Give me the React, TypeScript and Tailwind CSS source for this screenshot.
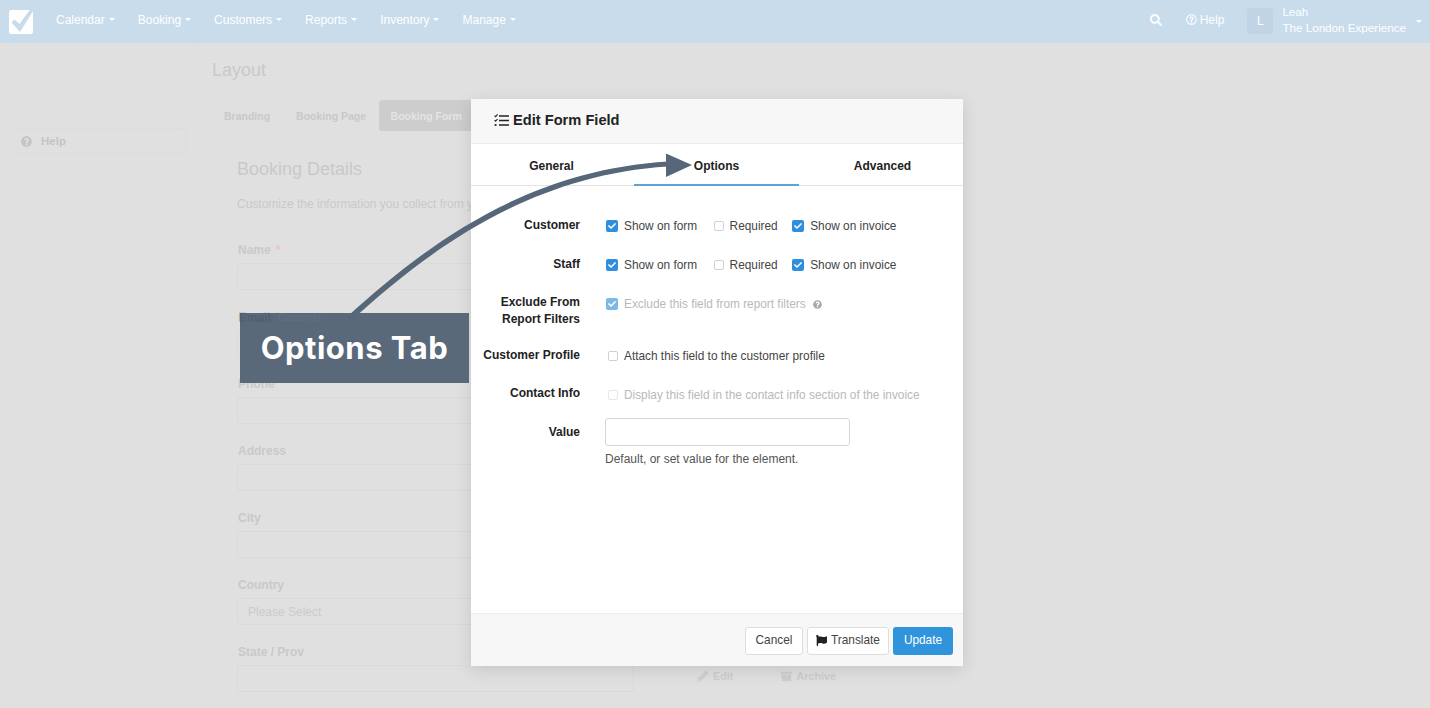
import { FaArchive, FaCheck, FaFlag, FaPencilAlt, FaQuestionCircle, FaRegQuestionCircle, FaSearch } from 'react-icons/fa'

const navItems = ['Calendar', 'Booking', 'Customers', 'Reports', 'Inventory', 'Manage']
const bgFields = [
  { label: 'Name', required: true },
  { label: 'Email', required: true },
  { label: 'Phone' },
  { label: 'Address' },
  { label: 'City' },
  { label: 'Country', placeholder: 'Please Select' },
  { label: 'State / Prov' },
]

function Caret({ className = '' }: { className?: string }) {
  return <span className={`inline-block h-0 w-0 border-x-[3.5px] border-t-[3.5px] border-x-transparent border-t-white ${className}`} />
}

function Logo() {
  return (
    <svg width="27" height="27" viewBox="0 0 27 27" className="shrink-0">
      <rect x="1" y="2" width="24" height="24" rx="2.5" fill="#ffffff" />
      <path d="M3.5 14.5 L6.5 11.5 L11.5 16 L22 1.5 H26 L12 24 Z" fill="#c9dcec" />
    </svg>
  )
}

function TasksIcon() {
  return (
    <svg width="15" height="13" viewBox="0 0 15 13" className="shrink-0 text-[#222]">
      <path d="M5 2h10M5 6.5h10M5 11h10" stroke="currentColor" strokeWidth="1.6" fill="none" />
      <path d="M0.6 1.6l1 1L3.6 0.4M0.6 6.2l1 1L3.6 5" stroke="currentColor" strokeWidth="1.1" fill="none" />
      <circle cx="1.6" cy="11" r="1.1" fill="currentColor" />
    </svg>
  )
}

function Check({ checked = false, faded = false, label, help = false }: { checked?: boolean; faded?: boolean; label: string; help?: boolean }) {
  return (
    <div className={`flex items-center gap-[6px] text-[11.85px] ${faded ? 'text-[#b9b9b9]' : 'text-[#444]'}`}>
      {checked ? (
        <span className={`-mt-[2px] flex h-[12px] w-[12px] items-center justify-center rounded-[2px] ${faded ? 'bg-[#7db9e6]' : 'bg-[#2f8fdc]'}`}>
          <FaCheck className="h-[8px] w-[8px] text-white" />
        </span>
      ) : (
        <span className={`-mt-[2px] ml-[2px] h-[10px] w-[10px] rounded-[2px] border bg-white ${faded ? 'border-[#e6e6ec]' : 'border-[#cfd0da]'}`} />
      )}
      <span>{label}</span>
      {help && <FaQuestionCircle className="ml-px h-[9px] w-[9px] text-[#a8a8a8]" />}
    </div>
  )
}

function Row({ label, children, className = '' }: { label: React.ReactNode; children: React.ReactNode; className?: string }) {
  return (
    <div className={`flex ${className}`}>
      <div className="w-[109px] shrink-0 text-right text-[12px] font-bold leading-[17px] text-[#222]">{label}</div>
      <div className="ml-[26px] flex-1">{children}</div>
    </div>
  )
}

export default function App() {
  return (
    <div className="relative h-[708px] w-[1430px] overflow-hidden bg-[#e0e0e0] font-['Liberation_Sans',sans-serif]">
      <header className="flex h-[43px] items-center bg-[#c9dcec] pl-[8px] pr-[8px] text-[12px] text-white">
        <Logo />
        <nav className="mb-[4px] ml-[21px] flex gap-[23px]">
          {navItems.map((item) => (
            <div key={item} className="flex items-center gap-[4px]">
              <span>{item}</span>
              <Caret />
            </div>
          ))}
        </nav>
        <div className="ml-auto flex items-center">
          <FaSearch className="mb-[4px] h-[12px] w-[12px]" />
          <div className="mb-[4px] ml-[24px] flex items-center gap-[3px]">
            <FaRegQuestionCircle className="h-[11px] w-[11px]" />
            <span>Help</span>
          </div>
          <div className="mb-[2px] ml-[23px] flex h-[26px] w-[26px] items-center justify-center rounded-[3px] bg-[#c0d4e5] text-[12px]">L</div>
          <div className="mb-[4px] ml-[9px] text-[11.65px] leading-[16px]">
            <div>Leah</div>
            <div>The London Experience</div>
          </div>
          <Caret className="ml-[10px]" />
        </div>
      </header>

      <div className="flex">
        <aside className="h-[665px] w-[198px] shrink-0 border-r border-[#dddddd] pl-[10px] pt-[85px]">
          <div className="flex h-[26px] w-[176px] items-center rounded-[3px] border border-[#dddddd] pl-[10px] text-[11.5px] font-bold text-[#c4c4c4]">
            <FaQuestionCircle className="h-[11px] w-[11px]" />
            <span className="ml-[9px] pt-[2px]">Help</span>
          </div>
        </aside>

        <main className="flex-1 pl-[14px] text-[#c9c9c9]">
          <h1 className="mt-[17px] text-[18px] leading-[20px]">Layout</h1>
          <div className="mt-[20px] flex items-center text-[10.5px] font-bold">
            <span className="pl-[12px] pt-[2px]">Branding</span>
            <span className="pl-[26px] pt-[2px]">Booking Page</span>
            <span className="ml-[12.5px] flex h-[31px] items-center rounded-[3px] bg-[#cdcdcd] px-[12px] pt-[2px] text-[#e4e4e4]">Booking Form</span>
          </div>
          <div className="pl-[25px]">
            <h2 className="mt-[26px] text-[18px] leading-[24px]">Booking Details</h2>
            <p className="mt-[15px] text-[12px] leading-[16px]">Customize the information you collect from your customers.</p>
            <div className="mt-[30px] w-[397px]">
              {bgFields.map((field) => (
                <div key={field.label} className="mb-[19px] pl-px">
                  <div className="h-[23px] text-[12px] font-bold leading-[16px]">
                    {field.label}
                    {field.required && <span className="ml-[5px] text-[#e8c6c6]">*</span>}
                  </div>
                  <div className="-ml-px mt-[-2px] flex h-[27px] items-center rounded-[3px] border border-[#dadada] pl-[10px] text-[12px] text-[#cbcbcb]">
                    {field.placeholder}
                  </div>
                </div>
              ))}
            </div>
          </div>
        </main>
      </div>

      <div className="absolute left-[697px] top-[668px] flex items-center gap-[5px] text-[10.8px] font-bold text-[#cecece]">
        <FaPencilAlt className="h-[11px] w-[11px]" />
        <span>Edit</span>
        <FaArchive className="ml-[43px] h-[11px] w-[11px]" />
        <span className="-ml-px">Archive</span>
      </div>

      {/* dialog */}
      <section className="absolute left-[471px] top-[99px] flex h-[567px] w-[492px] flex-col bg-white shadow-[0_4px_16px_rgba(0,0,0,0.12)]">
        <div className="flex h-[45px] items-center gap-[4px] border-b border-[#ececec] bg-[#f7f7f7] pb-[1px] pl-[23px] text-[14.65px] font-bold text-[#222]">
          <TasksIcon />
          <span>Edit Form Field</span>
        </div>
        <div className="flex h-[42px] border-b border-[#e4e4e4] text-[12px] font-bold text-[#222]">
          <div className="-mb-px flex w-[161px] shrink-0 items-center justify-center border-b-2 border-transparent pt-[3px]">General</div>
          <div className="-mb-px ml-[2px] flex w-[165px] shrink-0 items-center justify-center border-b-2 border-[#5ba3d9] pt-[3px]">Options</div>
          <div className="-mb-px flex w-[164px] shrink-0 items-center justify-center border-b-2 border-transparent pl-[3px] pt-[3px]">Advanced</div>
        </div>
        <div className="flex flex-1 flex-col pt-[31px]">
          <Row label="Customer" className="h-[39px]">
            <div className="flex gap-[14.5px] pt-[1px]">
              <Check checked label="Show on form" />
              <Check label="Required" />
              <Check checked label="Show on invoice" />
            </div>
          </Row>
          <Row label="Staff" className="h-[38px]">
            <div className="flex gap-[14.5px] pt-[1px]">
              <Check checked label="Show on form" />
              <Check label="Required" />
              <Check checked label="Show on invoice" />
            </div>
          </Row>
          <Row label={<>Exclude From<br />Report Filters</>} className="h-[53px]">
            <div className="pt-[2px]"><Check checked faded help label="Exclude this field from report filters" /></div>
          </Row>
          <Row label="Customer Profile" className="h-[38px]">
            <div className="pt-[1px]"><Check label="Attach this field to the customer profile" /></div>
          </Row>
          <Row label="Contact Info" className="h-[39px]">
            <div className="pt-[2px]"><Check faded label="Display this field in the contact info section of the invoice" /></div>
          </Row>
          <Row label="Value" className="items-start">
            <div className="-ml-px -mt-[6px]">
              <div className="h-[28px] w-[245px] rounded-[3px] border border-[#d6d6d6] bg-white" />
              <p className="mt-[6px] text-[12px] leading-[14px] text-[#555]">Default, or set value for the element.</p>
            </div>
          </Row>
        </div>
        <div className="flex h-[53px] items-center justify-end gap-[4px] border-t border-[#ececec] bg-[#f7f7f7] pr-[10px] pt-[2px] text-[11.85px]">
          <button className="h-[28px] w-[58px] rounded-[3px] border border-[#dedede] bg-white text-[#444]">Cancel</button>
          <button className="flex h-[28px] w-[82px] items-center justify-center gap-[4px] rounded-[3px] border border-[#dedede] bg-white text-[#444]">
            <FaFlag className="mb-[2px] h-[11px] w-[11px] text-[#222]" />
            Translate
          </button>
          <button className="h-[28px] w-[60px] rounded-[3px] bg-[#2f94dc] text-white">Update</button>
        </div>
      </section>

      {/* annotation */}
      <div className="absolute left-[240px] top-[313px] flex h-[70px] w-[229px] items-center justify-center bg-[#596979] font-['Inter',sans-serif] text-[31px] font-bold tracking-[0.5px] text-white">
        <span className="absolute left-[-1px] top-[-4px] font-['Liberation_Sans',sans-serif] text-[12px] font-bold tracking-normal text-[#525f6d]">Email</span>
        <span className="absolute left-[38px] top-[-3px] font-['Liberation_Sans',sans-serif] text-[10px] font-normal tracking-normal text-[#62717f]">Customer</span>
        Options Tab
      </div>
      <svg className="pointer-events-none absolute left-0 top-0" width="1430" height="708" viewBox="0 0 1430 708">
        <path d="M348 316 C 428 243, 528 170, 668 161.5 L 668 166.5 C 532 175, 432 247, 352 320 Z" fill="#566779" />
        <path d="M666 153.5 L692 165 L666 177 Z" fill="#566779" />
      </svg>
    </div>
  )
}
